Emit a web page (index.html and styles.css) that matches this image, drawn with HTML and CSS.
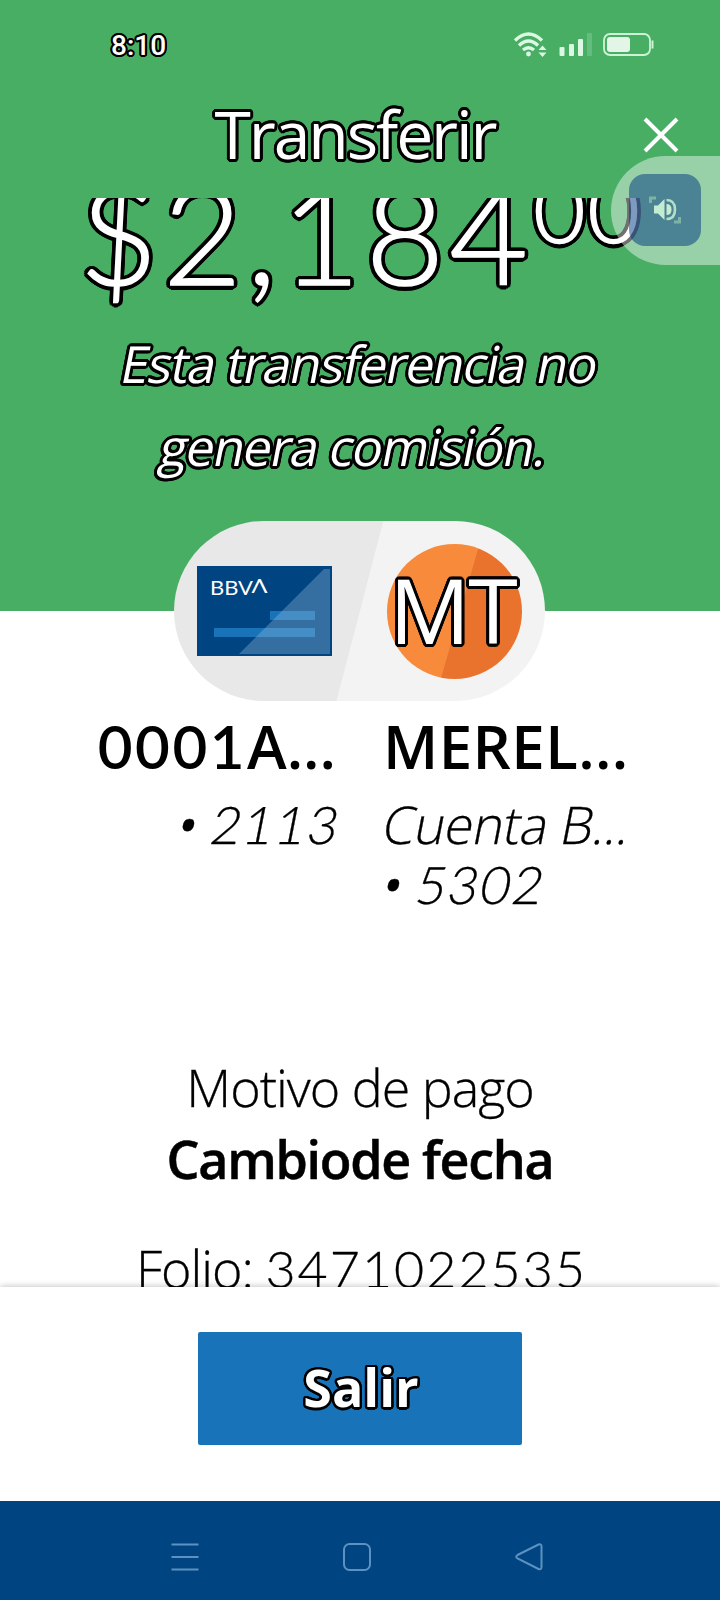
FILE: index.html
```html
<!DOCTYPE html>
<html lang="es">
<head>
<meta charset="UTF-8">
<meta name="viewport" content="width=device-width, initial-scale=1.0">
<title>Transferir</title>
<link rel="stylesheet" href="styles.css">
</head>

<body>
<div class="screen">

    <!-- barra de estado -->
    <div class="status">
        <span class="time outline">8:10</span>
        <svg class="status-icons" width="144" height="30" viewBox="0 0 144 30">
            <g fill="none" stroke="#dcf8e3" stroke-width="3.4">
                <path d="M2 10.500Q15.500 -2.500 29 10.500"/>
                <path d="M6 15.500Q15.500 6.500 25 15.500"/>
                <path d="M10 20Q15.500 15.500 21 20"/>
            </g>
            <g fill="#dcf8e3">
                <circle cx="15.500" cy="24" r="2.400"/>
                <path d="M25.500 20l4-4.500 4 4.500zM25.500 22.500l4 4.500 4-4.500z"/>
                <rect x="46.500" y="17" width="5" height="9" rx="1"/>
                <rect x="56" y="14" width="5" height="12" rx="1"/>
                <rect x="65" y="9" width="5" height="17" rx="1"/>
                <rect x="74" y="3" width="5" height="23" rx="1" opacity=".2"/>
            </g>
            <rect x="91" y="4" width="46" height="21" rx="6" fill="none" stroke="#cdf3d6" stroke-width="1.800"/>
            <rect x="94" y="7" width="23" height="15" rx="3" fill="#e2f5e6"/>
            <path d="M139.500 10.500v8" stroke="#cdf3d6" stroke-width="2"/>
        </svg>
    </div>

    <div class="topbar">
        <h1 class="title outline">Transferir</h1>
        <svg class="close" width="36" height="36" viewBox="0 0 36 36">
            <path d="M2 2L34 34M34 2L2 34" stroke="#fff" stroke-width="4"/>
        </svg>
    </div>

    <div class="content">
        <div class="hero">
            <div class="amount outline">$2,184<span class="cents">00</span></div>
            <p class="note outline"><span class="note-a slant">Esta transferencia no</span><br><span class="note-b slant">genera comisión.</span></p>
        </div>

        <div class="pill">
            <div class="card">
                <svg width="135" height="90" viewBox="0 0 135 90">
                    <rect width="135" height="90" fill="#004481"/>
                    <rect x="73" y="45" width="45" height="9" fill="#1973b8"/>
                    <rect x="17" y="62" width="101" height="9" fill="#1973b8"/>
                    <path d="M42 88L127 3H133V88Z" fill="#9cc3de" opacity=".34"/>
                    <text class="logo" x="13" y="29" textLength="43" lengthAdjust="spacingAndGlyphs">BBV</text>
                    <text class="logo" x="54.500" y="27" textLength="16" lengthAdjust="spacingAndGlyphs">Λ</text>
                </svg>
            </div>
            <div class="avatar"><span class="outline">MT</span></div>
        </div>

        <div class="accounts">
            <div class="from">
                <p class="name"><span class="num">0001</span>A...</p>
                <p class="detail"><span class="slant"><b>•</b> <span class="num">2113</span></span></p>
            </div>
            <div class="to">
                <p class="name">MEREL...</p>
                <p class="detail"><span class="bank slant">Cuenta B...</span><br><span class="slant"><b>•</b> <span class="num">5302</span></span></p>
            </div>
        </div>

        <div class="info">
            <p class="label">Motivo de pago</p>
            <p class="value">Cambiode fecha</p>
            <p class="folio">Folio: <span class="num">3471022535</span></p>
        </div>
    </div>

    <div class="footer">
        <button class="exit"><span class="outline">Salir</span></button>
    </div>

    <div class="nav">
        <svg width="28" height="28" viewBox="0 0 28 28"><path d="M.5 1.500h27M.5 14h27M.5 26.500h27"/></svg>
        <svg width="28" height="28" viewBox="0 0 28 28"><rect x="1" y="1" width="26" height="26" rx="5.500"/></svg>
        <svg width="28" height="28" viewBox="0 0 28 28"><path d="M2.500 12L23.500 1.500Q26.500 .5 26.500 3.500V24Q26.500 27 23.500 26L2.500 15.500Q0 13.700 2.500 12Z"/></svg>
    </div>

    <!-- botón flotante de lectura -->
    <div class="bubble">
        <div class="bubble-btn">
            <svg width="34" height="30" viewBox="0 0 34 30">
                <path d="M2.500 8V3H8M31.500 22V27H26" fill="none" stroke="#7db3a5" stroke-width="3"/>
                <path d="M6 10.500H10L16.500 4V25L10 18.500H6Z" fill="#c4ecd0"/>
                <path d="M18.500 9Q23.500 9 23.500 14.500T18.500 20Z" fill="#c4ecd0"/>
                <path d="M18.500 5Q27 5 27 14.500T18.500 24" fill="none" stroke="#b4dfc6" stroke-width="2.600"/>
            </svg>
        </div>
    </div>
</div>
</body>
</html>
```
FILE: styles.css
```css
* {
    box-sizing: border-box;
}
body, h1, p {
    margin: 0;
}
body {
    font-family: "Open Sans", "Noto Sans", sans-serif;
    background: #fff;
    color: #000;
}
.screen {
    position: relative;
    display: flex;
    flex-direction: column;
    width: 720px;
    height: 1600px;
    overflow: hidden;
}
/* contorno negro redondeado, --o es el grosor */
.outline {
    --o: 3px;
    --d: calc(var(--o) * .71);
    --a: calc(var(--o) * .92);
    --b: calc(var(--o) * .38);
    color: #fff;
    text-shadow:
        var(--o) 0 #000, calc(var(--o) * -1) 0 #000,
        0 var(--o) #000, 0 calc(var(--o) * -1) #000,
        var(--d) var(--d) #000, calc(var(--d) * -1) var(--d) #000,
        var(--d) calc(var(--d) * -1) #000, calc(var(--d) * -1) calc(var(--d) * -1) #000,
        var(--a) var(--b) #000, calc(var(--a) * -1) var(--b) #000,
        var(--a) calc(var(--b) * -1) #000, calc(var(--a) * -1) calc(var(--b) * -1) #000,
        var(--b) var(--a) #000, calc(var(--b) * -1) var(--a) #000,
        var(--b) calc(var(--a) * -1) #000, calc(var(--b) * -1) calc(var(--a) * -1) #000;
}
.slant {
    display: inline-block;
    transform: skewX(-11deg);
}
.num {
    font-family: Lato, sans-serif;
}

/* cabecera */
.status {
    display: flex;
    justify-content: space-between;
    align-items: center;
    height: 90px;
    padding: 0 63px 0 111px;
    background: #48ae64;
}
.time {
    --o: 2px;
    padding-top: 1px;
    font: 500 28px/30px Roboto, sans-serif;
}
.topbar {
    display: flex;
    justify-content: center;
    position: relative;
    height: 108px;
    padding: 1px 10px 0 0;
    background: #48ae64;
}
.title {
    font-size: 66px;
    font-weight: 400;
    line-height: 84px;
    letter-spacing: -2.1px;
}
.close {
    position: absolute;
    right: 41px;
    top: 27px;
}

.content {
    flex: 1;
    min-height: 0;
    overflow: hidden;
}
.hero {
    display: flow-root;
    height: 413px;
    background: #48ae64;
    text-align: center;
}
.amount {
    --o: 4.5px;
    height: 140px;
    margin-top: -35px;
    padding-left: 79px;
    font-family: Lato, sans-serif;
    font-size: 136px;
    font-weight: 300;
    line-height: 140px;
    letter-spacing: 5px;
    text-align: left;
    white-space: nowrap;
    -webkit-text-stroke: 1.6px #fff;
}
.cents {
    font-size: 90px;
    line-height: 0;
    vertical-align: 42px;
    letter-spacing: 2px;
}
.note {
    margin-top: 19px;
    font-size: 51px;
    line-height: 82.5px;
    letter-spacing: -1.3px;
}
.note-b {
    margin-right: 13px;
}

/* origen y destino */
.pill {
    position: relative;
    display: flex;
    justify-content: space-between;
    align-items: center;
    width: 371px;
    height: 180px;
    margin: -90px 0 0 174px;
    padding: 0 23px;
    border-radius: 90px;
    background: linear-gradient(104.6deg, #e8e8e8 50%, #f3f3f3 50.2%);
}
.card svg {
    display: block;
}
.logo {
    font: 400 20px Lato, sans-serif;
    fill: #fff;
}
.avatar {
    display: flex;
    justify-content: center;
    align-items: center;
    width: 135px;
    height: 135px;
    padding: 0 4px 5px 0;
    border-radius: 50%;
    background: linear-gradient(106deg, #f78a3b 53%, #e9722d 53.5%);
    font-size: 90px;
    line-height: 100px;
    letter-spacing: -2px;
}
.accounts {
    display: grid;
    grid-template-columns: 240px 240px;
    column-gap: 48px;
    margin: 10px 0 0 96px;
    white-space: nowrap;
}
.from {
    text-align: right;
}
.name {
    font-size: 60px;
    font-weight: 600;
    line-height: 70px;
}
.name .num {
    letter-spacing: 2.5px;
}
.to .name {
    margin-left: -1px;
    letter-spacing: .4px;
}
.detail {
    margin-top: 13px;
    font-size: 52px;
    font-weight: 300;
    line-height: 60px;
    -webkit-text-stroke: .3px #000;
}
.detail .num {
    letter-spacing: 2px;
}
.from .slant {
    margin-right: -5px;
}
.bank {
    letter-spacing: -.4px;
}
.info {
    margin-top: 137px;
    font-size: 52px;
    line-height: 71px;
    text-align: center;
}
.label, .folio {
    font-weight: 300;
    letter-spacing: -1px;
    -webkit-text-stroke: .3px #000;
}
.value {
    padding-top: 1px;
    font-weight: 600;
    letter-spacing: -1.3px;
    -webkit-text-stroke: .5px #000;
}
.folio {
    margin-top: 38px;
    padding-left: 3px;
}
.folio .num {
    letter-spacing: 2px;
}

/* pie */
.footer {
    position: relative;
    height: 214px;
    padding-top: 45px;
    background: #fff;
    box-shadow: 0 -1px 6px rgba(0, 0, 0, .22);
    text-align: center;
}
.exit {
    width: 324px;
    height: 113px;
    padding: 0 0 4px 2px;
    border: 0;
    border-radius: 2px;
    background: #1973b8;
    font: 700 52px/109px "Open Sans", sans-serif;
}
.exit .outline {
    --o: 2.5px;
}
.nav {
    position: relative;
    display: flex;
    gap: 144px;
    height: 99px;
    padding: 42px 0 0 171px;
    background: #004481;
}
.nav svg {
    fill: none;
    stroke: #5c92c2;
    stroke-width: 2;
}

.bubble {
    position: absolute;
    right: 0;
    top: 156px;
    width: 109px;
    height: 109px;
    padding: 18px;
    border-radius: 55px 0 0 55px;
    background: rgba(255, 255, 255, .44);
}
.bubble-btn {
    display: flex;
    justify-content: center;
    align-items: center;
    width: 72px;
    height: 72px;
    border-radius: 16px;
    background: rgba(0, 53, 128, .5);
}
```
